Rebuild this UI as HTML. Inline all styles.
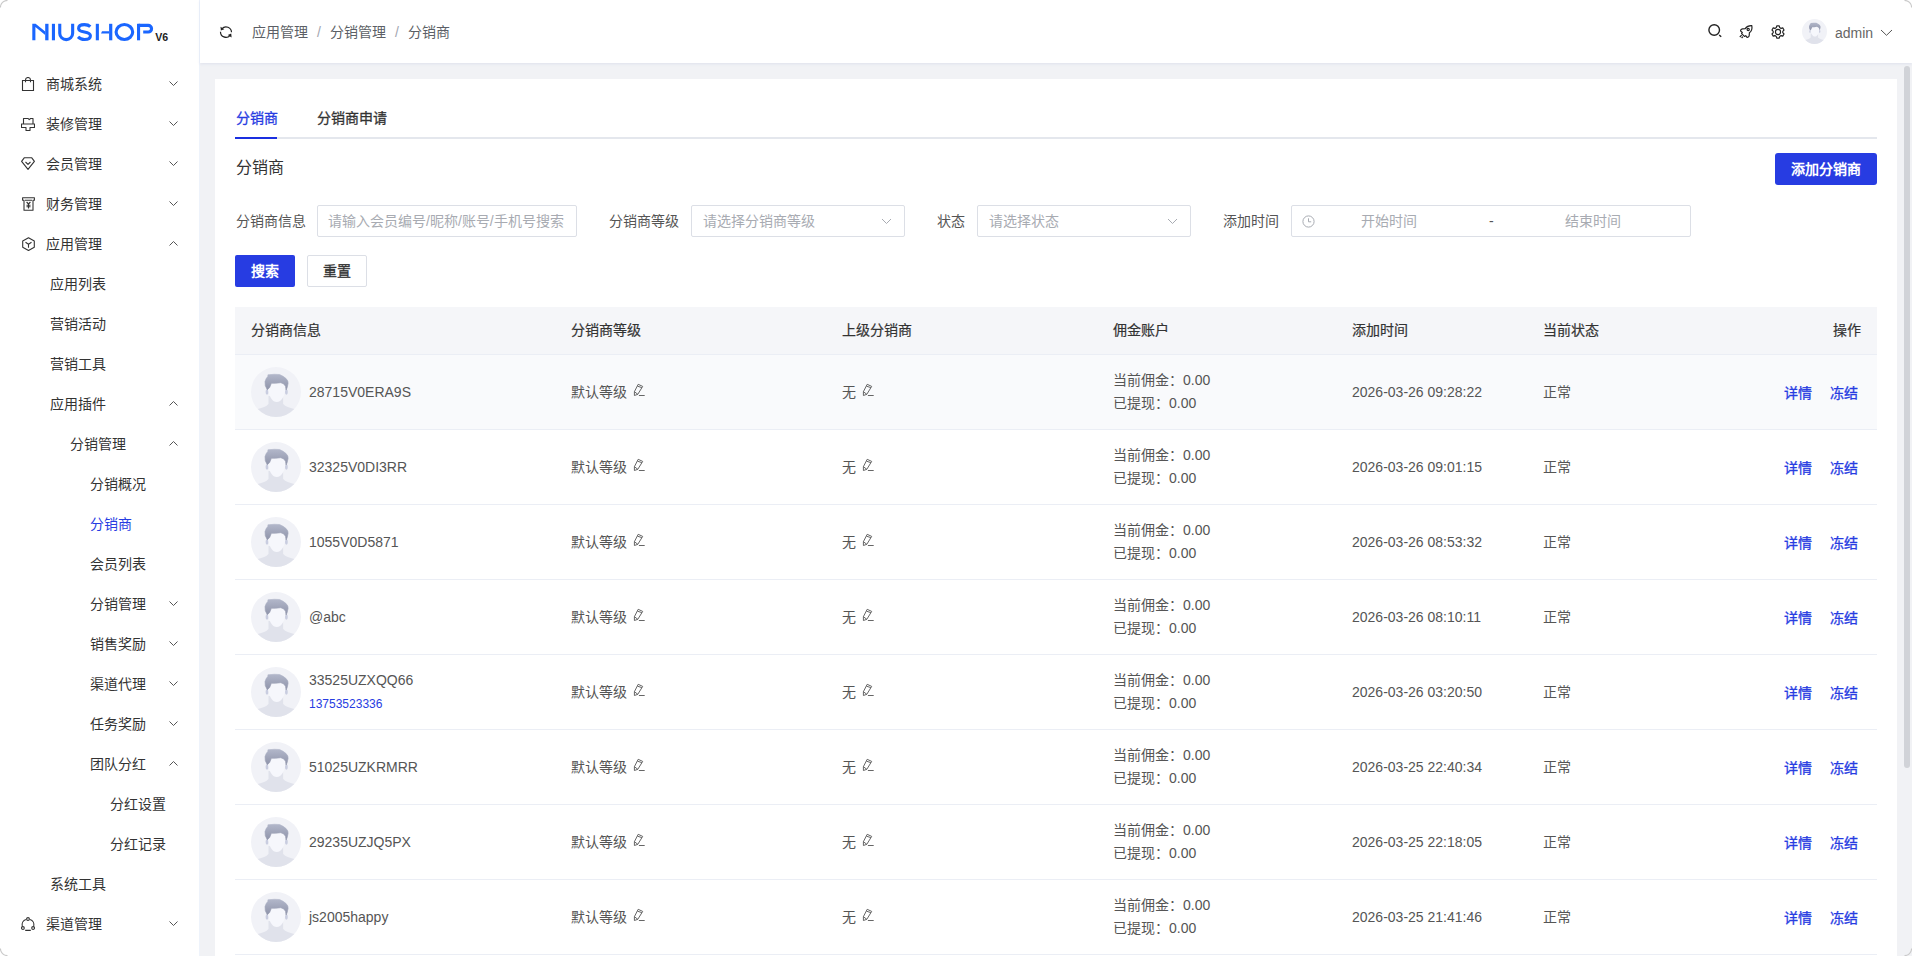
<!DOCTYPE html>
<html lang="zh-CN"><head><meta charset="utf-8">
<style>
*{margin:0;padding:0;box-sizing:border-box}
html,body{width:1912px;height:956px;overflow:hidden;background:#f1f2f5;font-family:"Liberation Sans",sans-serif;font-size:14px;color:#333}
.abs{position:absolute}
#side{position:absolute;left:0;top:0;width:199px;height:956px;background:#fff}
#sideline{position:absolute;left:199px;top:0;width:1px;height:956px;background:#eef3fb}
#hdr{position:absolute;left:200px;top:0;width:1712px;height:63px;background:#fff;box-shadow:0 1px 3px rgba(40,70,160,.09)}
.mi{position:absolute;height:40px;line-height:42px;color:#333;white-space:nowrap}
.mi.act{color:#273ce2}
.bc{position:absolute;top:21px;line-height:22px;color:#5c5f66;white-space:nowrap}
#card{position:absolute;left:215px;top:79px;width:1682px;height:900px;background:#fff}
.lbl{position:absolute;top:205px;line-height:32px;color:#555;white-space:nowrap}
.inp{position:absolute;top:205px;height:32px;border:1px solid #dcdfe6;background:#fff;border-radius:2px}
.ph{color:#a8abb2}
.inp .ph{position:absolute;top:0;line-height:30px;white-space:nowrap}
.btn{position:absolute;top:255px;width:60px;height:32px;line-height:32px;text-align:center;border-radius:2px;font-weight:bold}
#thead{position:absolute;left:235px;top:307px;width:1642px;height:48px;background:#f5f6f9;border-bottom:1px solid #ebeef5}
.th{position:absolute;top:0;line-height:46px;color:#333;font-weight:500;-webkit-text-stroke:0.2px #333;white-space:nowrap}
.row{position:absolute;left:235px;width:1642px;height:75px;border-bottom:1px solid #ebeef5;background:#fff}
.row.hov{background:#f9fafc}
.row>div{position:absolute;white-space:nowrap;color:#555}
.av{left:16px;top:12px;width:50px;height:50px}
.av svg{display:block}
.nm{left:74px;line-height:22px}
.row .ph{left:74px;top:40px;font-size:12px;line-height:18px;color:#273ce2}
.c2{left:336px;top:26px;line-height:22px}
.c3{left:607px;top:26px;line-height:22px}
.pen{position:relative;top:0;margin-left:6px}
.c4a{left:878px;top:14px;line-height:23px}
.c4b{left:878px;top:37px;line-height:23px}
.c5{left:1117px;top:26px;line-height:22px}
.c6{left:1308px;top:26px;line-height:22px}
.op1{left:1549px;top:27px;line-height:22px;color:#273ce2!important;font-weight:500;-webkit-text-stroke:0.3px #273ce2}
.op2{left:1595px;top:27px;line-height:22px;color:#273ce2!important;font-weight:500;-webkit-text-stroke:0.3px #273ce2}
</style></head><body>
<svg width="0" height="0" style="position:absolute"><defs><linearGradient id="hg" x1="0" y1="0" x2="0" y2="1"><stop offset="0" stop-color="#b2b7ca"/><stop offset="1" stop-color="#8e93a9"/></linearGradient></defs></svg>
<div id="side">
<svg class="abs" style="left:26px;top:16px" width="150" height="32" viewBox="0 0 150 32">
<g fill="#1a66ff">
<path d="M6.3 7.8H9.6L19.2 15.6V18.9L9.4 11V24.3H6.3Z"/>
<rect x="19.2" y="7.8" width="3.3" height="16.5"/>
<rect x="25.9" y="7.8" width="3.1" height="16.5"/>
<rect x="69.8" y="7.8" width="3.1" height="16.5"/>
<path d="M76 15.3H83.1V17.6H75Z"/>
<rect x="83.1" y="7.8" width="3.2" height="16.5"/>
<rect x="111" y="7.8" width="3.1" height="16.5"/>
</g>
<g fill="none" stroke="#1a66ff" stroke-width="3.1">
<path d="M33.75 7.8V17.2A6.45 6.45 0 0 0 46.65 17.2V7.8"/>
<path d="M64.3 10.6C62.6 9 60.5 8.6 58.4 8.6C55 8.6 52.6 10 52.6 12.4C52.6 17.6 64.4 14.3 64.4 19.7C64.4 22.3 62 23.5 58.6 23.5C55.8 23.5 53.6 22.6 52 20.9"/>
<ellipse cx="98.4" cy="16" rx="8.3" ry="7.45"/>
<path d="M112.5 9.35H122.2A3.35 3.35 0 0 1 122.2 16.05H117.2"/>
</g>
<text x="129.2" y="24.7" font-family="Liberation Sans" font-weight="bold" font-size="10.6" fill="#222">V6</text>
</svg>
</div>
<div id="sideline"></div>
<div id="hdr"></div>
<svg class="abs" style="left:219px;top:25px" width="14" height="14" viewBox="0 0 14 14"><g fill="none" stroke="#222" stroke-width="1.2"><path d="M3 3.6A5.5 5.5 0 0 1 12.5 7.3"/><path d="M1.5 6.7A5.5 5.5 0 0 0 11 10.6"/></g><g fill="#222"><path d="M1.5 1.7L1.9 5.6L5.3 4.2Z"/><path d="M12.6 12.4L12.2 8.5L8.8 9.9Z"/></g></svg>
<div class="bc" style="left:252px">应用管理</div>
<div class="bc" style="left:317px;color:#a3a6b0">/</div>
<div class="bc" style="left:330px">分销管理</div>
<div class="bc" style="left:395px;color:#a3a6b0">/</div>
<div class="bc" style="left:408px">分销商</div>
<svg class="abs" style="left:1706px;top:22px" width="18" height="17" viewBox="0 0 18 17"><g fill="none" stroke="#222" stroke-width="1.4"><circle cx="8.2" cy="8" r="5.3"/><path d="M13.2 13L15.2 14.8"/></g></svg>
<svg class="abs" style="left:1738px;top:24px" width="16" height="16" viewBox="0 0 16 16"><g fill="none" stroke="#222" stroke-width="1.2" stroke-linejoin="round"><path d="M13.8 1.6C11 1.4 8.8 2.4 7.2 4.6L4.5 4.8C3 5 2.2 6.5 2.8 7.2L4.3 8.4L3.6 9.6L6.5 12.4L7.7 11.7L8.9 13.2C9.6 13.8 11 12.9 11.2 11.5L11.4 8.8C13.6 7.2 14.4 5 13.8 1.6Z"/><circle cx="10.2" cy="5.5" r="1.1"/><path d="M3.6 11.2L1.8 13 M5 12.6L3.6 14"/></g></svg>
<svg class="abs" style="left:1770px;top:24px" width="16" height="16" viewBox="0 0 16 16"><g fill="none" stroke="#222" stroke-width="1.25" stroke-linejoin="round" transform="translate(8 8) scale(0.9) translate(-8 -8)"><path d="M6.6 1.2H9.4L9.9 3.1L11.4 4L13.3 3.4L14.7 5.8L13.3 7.2V8.8L14.7 10.2L13.3 12.6L11.4 12L9.9 12.9L9.4 14.8H6.6L6.1 12.9L4.6 12L2.7 12.6L1.3 10.2L2.7 8.8V7.2L1.3 5.8L2.7 3.4L4.6 4L6.1 3.1Z"/><circle cx="8" cy="8" r="2.85"/></g></svg>
<svg class="abs" style="left:1802px;top:19px" width="25" height="25" viewBox="0 0 50 50"><circle cx="25" cy="25" r="25" fill="#f1f2f7"/><path d="M17.5 29L32.1 29L32.1 37C34.5 39.5 38.5 40.8 43.2 42.1A25 25 0 0 1 6.8 42.1C11.5 40.8 15.5 39.5 17.5 37Z" fill="#e0e2eb"/><ellipse cx="16" cy="25" rx="1.4" ry="2.8" fill="#c9cde0"/><ellipse cx="35.4" cy="25" rx="1.4" ry="2.8" fill="#c9cde0"/><path d="M17.3 21C17.3 17.5 19.5 16 25.7 16C32 16 34.3 17.5 34.3 21C34.3 28.5 30.5 35.1 25.7 35.1C21 35.1 17.3 28.5 17.3 21Z" fill="#f6f7fc"/><path d="M16.9 7.8L23.4 7.25L28.6 7.5L32.1 9.3L35.1 11.6L36.8 14L37.1 16.3L36.2 20.4L35.1 23.1L34.5 19.3L32.7 16.9L29.8 15.7L24.5 16.3L20.4 16.3L18.7 20.4L16.3 22.8L14.3 18.7L14 14.6L15.2 11.6L16.9 9.3Z" fill="url(#hg)"/></svg>
<div class="abs" style="left:1835px;top:22px;line-height:22px;color:#666">admin</div>
<svg class="abs" style="left:1879.5px;top:28.5px" width="13" height="8" viewBox="0 0 13 8"><path d="M1 1L6.5 6.3L12 1" fill="none" stroke="#555" stroke-width="1"/></svg>
<div class="abs" style="left:1904px;top:66px;width:6px;height:702px;border-radius:3px;background:#d1d3d8"></div>
<div id="card"></div>
<svg class="abs" style="left:0;top:0;z-index:9" width="1912" height="956" viewBox="0 0 1912 956"><g fill="none" stroke="#c9c9c9" stroke-width="1.1"><path d="M0.4 7.5A7.1 7.1 0 0 1 7.5 0.4"/><path d="M1904.5 0.4A7.1 7.1 0 0 1 1911.6 7.5"/><path d="M0.4 948.5A7.1 7.1 0 0 0 7.5 955.6"/><path d="M1911.6 948.5A7.1 7.1 0 0 1 1904.5 955.6"/></g></svg>
<div class="abs" style="left:235px;top:137px;width:1642px;height:2px;background:#e4e7ed"></div>
<div class="abs" style="left:235px;top:137px;width:42px;height:2px;background:#1a2fe0"></div>
<div class="abs" style="left:236px;top:107px;line-height:22px;color:#273ce2;font-weight:500;-webkit-text-stroke:0.3px #273ce2">分销商</div>
<div class="abs" style="left:317px;top:107px;line-height:22px;color:#333;font-weight:500;-webkit-text-stroke:0.3px #333">分销商申请</div>
<div class="abs" style="left:236px;top:156px;line-height:24px;font-size:16px;color:#333">分销商</div>
<div class="abs" style="left:1775px;top:153px;width:102px;height:32px;line-height:32px;text-align:center;background:#273ce2;color:#fff;font-weight:bold;border-radius:3px">添加分销商</div>
<div class="lbl" style="left:236px">分销商信息</div>
<div class="inp" style="left:317px;width:260px"><span class="ph" style="left:10px">请输入会员编号/昵称/账号/手机号搜索</span></div>
<div class="lbl" style="left:609px">分销商等级</div>
<div class="inp" style="left:691px;width:214px"><span class="ph" style="left:11px">请选择分销商等级</span><svg class="abs" style="left:189px;top:12px" width="11" height="7" viewBox="0 0 11 7"><path d="M1 1L5.5 5.5L10 1" fill="none" stroke="#a8abb2" stroke-width="1"/></svg></div>
<div class="lbl" style="left:937px">状态</div>
<div class="inp" style="left:977px;width:214px"><span class="ph" style="left:11px">请选择状态</span><svg class="abs" style="left:189px;top:12px" width="11" height="7" viewBox="0 0 11 7"><path d="M1 1L5.5 5.5L10 1" fill="none" stroke="#a8abb2" stroke-width="1"/></svg></div>
<div class="lbl" style="left:1223px">添加时间</div>
<div class="inp" style="left:1291px;width:400px"><svg class="abs" style="left:10px;top:9px" width="13" height="13" viewBox="0 0 13 13"><g fill="none" stroke="#a8abb2" stroke-width="1"><circle cx="6.5" cy="6.5" r="5.6"/><path d="M6.5 3.3V6.8H9.2"/></g></svg><span class="ph" style="left:69px">开始时间</span><span class="ph" style="left:197px;color:#555">-</span><span class="ph" style="left:273px">结束时间</span></div>
<div class="btn" style="left:235px;background:#273ce2;color:#fff">搜索</div>
<div class="btn" style="left:307px;border:1px solid #dcdfe6;color:#333;line-height:30px;font-weight:500;-webkit-text-stroke:0.3px #333">重置</div>
<div id="thead">
<div class="th" style="left:16px">分销商信息</div>
<div class="th" style="left:336px">分销商等级</div>
<div class="th" style="left:607px">上级分销商</div>
<div class="th" style="left:878px">佣金账户</div>
<div class="th" style="left:1117px">添加时间</div>
<div class="th" style="left:1308px">当前状态</div>
<div class="th" style="left:1598px">操作</div>
</div>
<div class="mi" style="top:63px;left:46px">商城系统</div>
<svg class="abs" style="left:21px;top:77px" width="14" height="14" viewBox="0 0 14 14"><path d="M1.5 3.5H12.5V13.5H1.5Z M4.5 5.3V3A2.5 2.5 0 0 1 9.5 3V5.3" fill="none" stroke="#333" stroke-width="1.1"/></svg>
<svg class="abs" style="left:168.5px;top:80.5px" width="9" height="5" viewBox="0 0 9 5"><path d="M0.5 0.5L4.5 4.5L8.5 0.5" fill="none" stroke="#555" stroke-width="1"/></svg>
<div class="mi" style="top:103px;left:46px">装修管理</div>
<svg class="abs" style="left:21px;top:117px" width="14" height="14" viewBox="0 0 14 14"><path d="M2.5 1.5H7.2L8.2 2.6L9.6 1.5H12V7H2.5Z M0.5 7H13.5V10.5H9V13.5H5V10.5H0.5Z" fill="none" stroke="#333" stroke-width="1.1" stroke-linejoin="round"/></svg>
<svg class="abs" style="left:168.5px;top:120.5px" width="9" height="5" viewBox="0 0 9 5"><path d="M0.5 0.5L4.5 4.5L8.5 0.5" fill="none" stroke="#555" stroke-width="1"/></svg>
<div class="mi" style="top:143px;left:46px">会员管理</div>
<svg class="abs" style="left:21px;top:157px" width="14" height="13" viewBox="0 0 14 13"><path d="M3.2 0.8H10.8L13.4 4.3L7 12.4L0.6 4.3Z M4.5 5L7 7.3L9.5 5" fill="none" stroke="#333" stroke-width="1.1" stroke-linejoin="round"/></svg>
<svg class="abs" style="left:168.5px;top:160.5px" width="9" height="5" viewBox="0 0 9 5"><path d="M0.5 0.5L4.5 4.5L8.5 0.5" fill="none" stroke="#555" stroke-width="1"/></svg>
<div class="mi" style="top:183px;left:46px">财务管理</div>
<svg class="abs" style="left:21.5px;top:197px" width="13" height="14" viewBox="0 0 13 14"><path d="M0.6 0.8H12.4V3.2H11V13.2H2V3.2H0.6Z M3 3.2H10 M4.6 5L6.5 7L8.4 5 M6.5 7V11.5 M4.5 8.2H8.5 M4.5 9.8H8.5" fill="none" stroke="#333" stroke-width="1.1" stroke-linejoin="round"/></svg>
<svg class="abs" style="left:168.5px;top:200.5px" width="9" height="5" viewBox="0 0 9 5"><path d="M0.5 0.5L4.5 4.5L8.5 0.5" fill="none" stroke="#555" stroke-width="1"/></svg>
<div class="mi" style="top:223px;left:46px">应用管理</div>
<svg class="abs" style="left:21.5px;top:237px" width="13" height="14" viewBox="0 0 13 14"><path d="M6.5 0.7L12.3 3.9V10.3L6.5 13.5L0.7 10.3V3.9Z M3.5 5.2L6.5 7.2L9.5 5.2 M6.5 7.2V10.8" fill="none" stroke="#333" stroke-width="1.1" stroke-linejoin="round"/></svg>
<svg class="abs" style="left:168.5px;top:240.5px" width="9" height="5" viewBox="0 0 9 5"><path d="M0.5 4.5L4.5 0.5L8.5 4.5" fill="none" stroke="#555" stroke-width="1"/></svg>
<div class="mi" style="top:263px;left:50px">应用列表</div>
<div class="mi" style="top:303px;left:50px">营销活动</div>
<div class="mi" style="top:343px;left:50px">营销工具</div>
<div class="mi" style="top:383px;left:50px">应用插件</div>
<svg class="abs" style="left:168.5px;top:400.5px" width="9" height="5" viewBox="0 0 9 5"><path d="M0.5 4.5L4.5 0.5L8.5 4.5" fill="none" stroke="#555" stroke-width="1"/></svg>
<div class="mi" style="top:423px;left:70px">分销管理</div>
<svg class="abs" style="left:168.5px;top:440.5px" width="9" height="5" viewBox="0 0 9 5"><path d="M0.5 4.5L4.5 0.5L8.5 4.5" fill="none" stroke="#555" stroke-width="1"/></svg>
<div class="mi" style="top:463px;left:90px">分销概况</div>
<div class="mi act" style="top:503px;left:90px">分销商</div>
<div class="mi" style="top:543px;left:90px">会员列表</div>
<div class="mi" style="top:583px;left:90px">分销管理</div>
<svg class="abs" style="left:168.5px;top:600.5px" width="9" height="5" viewBox="0 0 9 5"><path d="M0.5 0.5L4.5 4.5L8.5 0.5" fill="none" stroke="#555" stroke-width="1"/></svg>
<div class="mi" style="top:623px;left:90px">销售奖励</div>
<svg class="abs" style="left:168.5px;top:640.5px" width="9" height="5" viewBox="0 0 9 5"><path d="M0.5 0.5L4.5 4.5L8.5 0.5" fill="none" stroke="#555" stroke-width="1"/></svg>
<div class="mi" style="top:663px;left:90px">渠道代理</div>
<svg class="abs" style="left:168.5px;top:680.5px" width="9" height="5" viewBox="0 0 9 5"><path d="M0.5 0.5L4.5 4.5L8.5 0.5" fill="none" stroke="#555" stroke-width="1"/></svg>
<div class="mi" style="top:703px;left:90px">任务奖励</div>
<svg class="abs" style="left:168.5px;top:720.5px" width="9" height="5" viewBox="0 0 9 5"><path d="M0.5 0.5L4.5 4.5L8.5 0.5" fill="none" stroke="#555" stroke-width="1"/></svg>
<div class="mi" style="top:743px;left:90px">团队分红</div>
<svg class="abs" style="left:168.5px;top:760.5px" width="9" height="5" viewBox="0 0 9 5"><path d="M0.5 4.5L4.5 0.5L8.5 4.5" fill="none" stroke="#555" stroke-width="1"/></svg>
<div class="mi" style="top:783px;left:110px">分红设置</div>
<div class="mi" style="top:823px;left:110px">分红记录</div>
<div class="mi" style="top:863px;left:50px">系统工具</div>
<div class="mi" style="top:903px;left:46px">渠道管理</div>
<svg class="abs" style="left:21px;top:917px" width="14" height="14" viewBox="0 0 14 14"><g fill="none" stroke="#333" stroke-width="1.1"><circle cx="7" cy="2" r="1.4"/><circle cx="1.9" cy="11" r="1.4"/><circle cx="12.1" cy="11" r="1.4"/><path d="M4.9 2.4A5.6 5.6 0 0 0 1.3 9 M9.1 2.4A5.6 5.6 0 0 1 12.7 9 M4.2 13.4H9.8"/></g></svg>
<svg class="abs" style="left:168.5px;top:920.5px" width="9" height="5" viewBox="0 0 9 5"><path d="M0.5 0.5L4.5 4.5L8.5 0.5" fill="none" stroke="#555" stroke-width="1"/></svg><div class="row hov" style="top:355px"><div class="av"><svg width="50" height="50" viewBox="0 0 50 50"><circle cx="25" cy="25" r="25" fill="#f1f2f7"/><path d="M17.5 29L32.1 29L32.1 37C34.5 39.5 38.5 40.8 43.2 42.1A25 25 0 0 1 6.8 42.1C11.5 40.8 15.5 39.5 17.5 37Z" fill="#e0e2eb"/><ellipse cx="16" cy="25" rx="1.4" ry="2.8" fill="#c9cde0"/><ellipse cx="35.4" cy="25" rx="1.4" ry="2.8" fill="#c9cde0"/><path d="M17.3 21C17.3 17.5 19.5 16 25.7 16C32 16 34.3 17.5 34.3 21C34.3 28.5 30.5 35.1 25.7 35.1C21 35.1 17.3 28.5 17.3 21Z" fill="#f6f7fc"/><path d="M16.9 7.8L23.4 7.25L28.6 7.5L32.1 9.3L35.1 11.6L36.8 14L37.1 16.3L36.2 20.4L35.1 23.1L34.5 19.3L32.7 16.9L29.8 15.7L24.5 16.3L20.4 16.3L18.7 20.4L16.3 22.8L14.3 18.7L14 14.6L15.2 11.6L16.9 9.3Z" fill="url(#hg)" stroke="url(#hg)" stroke-width="0.6" stroke-linejoin="round"/></svg></div><div class="nm" style="top:26px">28715V0ERA9S</div>
<div class="c2">默认等级<svg class="pen" width="14" height="14" viewBox="0 0 14 14"><path d="M1.4 12.5L1.4 8.7L5.2 1.3L9.7 3.4L4.8 11.3Z M4.5 3.2L8.8 4.6 M1.4 8.7L4.8 11.3 M5.9 12.5H11.7" fill="none" stroke="#555" stroke-width="0.9" stroke-linejoin="round"/></svg></div><div class="c3">无<svg class="pen" width="14" height="14" viewBox="0 0 14 14"><path d="M1.4 12.5L1.4 8.7L5.2 1.3L9.7 3.4L4.8 11.3Z M4.5 3.2L8.8 4.6 M1.4 8.7L4.8 11.3 M5.9 12.5H11.7" fill="none" stroke="#555" stroke-width="0.9" stroke-linejoin="round"/></svg></div>
<div class="c4a">当前佣金：0.00</div><div class="c4b">已提现：0.00</div>
<div class="c5">2026-03-26 09:28:22</div><div class="c6">正常</div>
<div class="op1">详情</div><div class="op2">冻结</div></div>
<div class="row" style="top:430px"><div class="av"><svg width="50" height="50" viewBox="0 0 50 50"><circle cx="25" cy="25" r="25" fill="#f1f2f7"/><path d="M17.5 29L32.1 29L32.1 37C34.5 39.5 38.5 40.8 43.2 42.1A25 25 0 0 1 6.8 42.1C11.5 40.8 15.5 39.5 17.5 37Z" fill="#e0e2eb"/><ellipse cx="16" cy="25" rx="1.4" ry="2.8" fill="#c9cde0"/><ellipse cx="35.4" cy="25" rx="1.4" ry="2.8" fill="#c9cde0"/><path d="M17.3 21C17.3 17.5 19.5 16 25.7 16C32 16 34.3 17.5 34.3 21C34.3 28.5 30.5 35.1 25.7 35.1C21 35.1 17.3 28.5 17.3 21Z" fill="#f6f7fc"/><path d="M16.9 7.8L23.4 7.25L28.6 7.5L32.1 9.3L35.1 11.6L36.8 14L37.1 16.3L36.2 20.4L35.1 23.1L34.5 19.3L32.7 16.9L29.8 15.7L24.5 16.3L20.4 16.3L18.7 20.4L16.3 22.8L14.3 18.7L14 14.6L15.2 11.6L16.9 9.3Z" fill="url(#hg)" stroke="url(#hg)" stroke-width="0.6" stroke-linejoin="round"/></svg></div><div class="nm" style="top:26px">32325V0DI3RR</div>
<div class="c2">默认等级<svg class="pen" width="14" height="14" viewBox="0 0 14 14"><path d="M1.4 12.5L1.4 8.7L5.2 1.3L9.7 3.4L4.8 11.3Z M4.5 3.2L8.8 4.6 M1.4 8.7L4.8 11.3 M5.9 12.5H11.7" fill="none" stroke="#555" stroke-width="0.9" stroke-linejoin="round"/></svg></div><div class="c3">无<svg class="pen" width="14" height="14" viewBox="0 0 14 14"><path d="M1.4 12.5L1.4 8.7L5.2 1.3L9.7 3.4L4.8 11.3Z M4.5 3.2L8.8 4.6 M1.4 8.7L4.8 11.3 M5.9 12.5H11.7" fill="none" stroke="#555" stroke-width="0.9" stroke-linejoin="round"/></svg></div>
<div class="c4a">当前佣金：0.00</div><div class="c4b">已提现：0.00</div>
<div class="c5">2026-03-26 09:01:15</div><div class="c6">正常</div>
<div class="op1">详情</div><div class="op2">冻结</div></div>
<div class="row" style="top:505px"><div class="av"><svg width="50" height="50" viewBox="0 0 50 50"><circle cx="25" cy="25" r="25" fill="#f1f2f7"/><path d="M17.5 29L32.1 29L32.1 37C34.5 39.5 38.5 40.8 43.2 42.1A25 25 0 0 1 6.8 42.1C11.5 40.8 15.5 39.5 17.5 37Z" fill="#e0e2eb"/><ellipse cx="16" cy="25" rx="1.4" ry="2.8" fill="#c9cde0"/><ellipse cx="35.4" cy="25" rx="1.4" ry="2.8" fill="#c9cde0"/><path d="M17.3 21C17.3 17.5 19.5 16 25.7 16C32 16 34.3 17.5 34.3 21C34.3 28.5 30.5 35.1 25.7 35.1C21 35.1 17.3 28.5 17.3 21Z" fill="#f6f7fc"/><path d="M16.9 7.8L23.4 7.25L28.6 7.5L32.1 9.3L35.1 11.6L36.8 14L37.1 16.3L36.2 20.4L35.1 23.1L34.5 19.3L32.7 16.9L29.8 15.7L24.5 16.3L20.4 16.3L18.7 20.4L16.3 22.8L14.3 18.7L14 14.6L15.2 11.6L16.9 9.3Z" fill="url(#hg)" stroke="url(#hg)" stroke-width="0.6" stroke-linejoin="round"/></svg></div><div class="nm" style="top:26px">1055V0D5871</div>
<div class="c2">默认等级<svg class="pen" width="14" height="14" viewBox="0 0 14 14"><path d="M1.4 12.5L1.4 8.7L5.2 1.3L9.7 3.4L4.8 11.3Z M4.5 3.2L8.8 4.6 M1.4 8.7L4.8 11.3 M5.9 12.5H11.7" fill="none" stroke="#555" stroke-width="0.9" stroke-linejoin="round"/></svg></div><div class="c3">无<svg class="pen" width="14" height="14" viewBox="0 0 14 14"><path d="M1.4 12.5L1.4 8.7L5.2 1.3L9.7 3.4L4.8 11.3Z M4.5 3.2L8.8 4.6 M1.4 8.7L4.8 11.3 M5.9 12.5H11.7" fill="none" stroke="#555" stroke-width="0.9" stroke-linejoin="round"/></svg></div>
<div class="c4a">当前佣金：0.00</div><div class="c4b">已提现：0.00</div>
<div class="c5">2026-03-26 08:53:32</div><div class="c6">正常</div>
<div class="op1">详情</div><div class="op2">冻结</div></div>
<div class="row" style="top:580px"><div class="av"><svg width="50" height="50" viewBox="0 0 50 50"><circle cx="25" cy="25" r="25" fill="#f1f2f7"/><path d="M17.5 29L32.1 29L32.1 37C34.5 39.5 38.5 40.8 43.2 42.1A25 25 0 0 1 6.8 42.1C11.5 40.8 15.5 39.5 17.5 37Z" fill="#e0e2eb"/><ellipse cx="16" cy="25" rx="1.4" ry="2.8" fill="#c9cde0"/><ellipse cx="35.4" cy="25" rx="1.4" ry="2.8" fill="#c9cde0"/><path d="M17.3 21C17.3 17.5 19.5 16 25.7 16C32 16 34.3 17.5 34.3 21C34.3 28.5 30.5 35.1 25.7 35.1C21 35.1 17.3 28.5 17.3 21Z" fill="#f6f7fc"/><path d="M16.9 7.8L23.4 7.25L28.6 7.5L32.1 9.3L35.1 11.6L36.8 14L37.1 16.3L36.2 20.4L35.1 23.1L34.5 19.3L32.7 16.9L29.8 15.7L24.5 16.3L20.4 16.3L18.7 20.4L16.3 22.8L14.3 18.7L14 14.6L15.2 11.6L16.9 9.3Z" fill="url(#hg)" stroke="url(#hg)" stroke-width="0.6" stroke-linejoin="round"/></svg></div><div class="nm" style="top:26px">@abc</div>
<div class="c2">默认等级<svg class="pen" width="14" height="14" viewBox="0 0 14 14"><path d="M1.4 12.5L1.4 8.7L5.2 1.3L9.7 3.4L4.8 11.3Z M4.5 3.2L8.8 4.6 M1.4 8.7L4.8 11.3 M5.9 12.5H11.7" fill="none" stroke="#555" stroke-width="0.9" stroke-linejoin="round"/></svg></div><div class="c3">无<svg class="pen" width="14" height="14" viewBox="0 0 14 14"><path d="M1.4 12.5L1.4 8.7L5.2 1.3L9.7 3.4L4.8 11.3Z M4.5 3.2L8.8 4.6 M1.4 8.7L4.8 11.3 M5.9 12.5H11.7" fill="none" stroke="#555" stroke-width="0.9" stroke-linejoin="round"/></svg></div>
<div class="c4a">当前佣金：0.00</div><div class="c4b">已提现：0.00</div>
<div class="c5">2026-03-26 08:10:11</div><div class="c6">正常</div>
<div class="op1">详情</div><div class="op2">冻结</div></div>
<div class="row" style="top:655px"><div class="av"><svg width="50" height="50" viewBox="0 0 50 50"><circle cx="25" cy="25" r="25" fill="#f1f2f7"/><path d="M17.5 29L32.1 29L32.1 37C34.5 39.5 38.5 40.8 43.2 42.1A25 25 0 0 1 6.8 42.1C11.5 40.8 15.5 39.5 17.5 37Z" fill="#e0e2eb"/><ellipse cx="16" cy="25" rx="1.4" ry="2.8" fill="#c9cde0"/><ellipse cx="35.4" cy="25" rx="1.4" ry="2.8" fill="#c9cde0"/><path d="M17.3 21C17.3 17.5 19.5 16 25.7 16C32 16 34.3 17.5 34.3 21C34.3 28.5 30.5 35.1 25.7 35.1C21 35.1 17.3 28.5 17.3 21Z" fill="#f6f7fc"/><path d="M16.9 7.8L23.4 7.25L28.6 7.5L32.1 9.3L35.1 11.6L36.8 14L37.1 16.3L36.2 20.4L35.1 23.1L34.5 19.3L32.7 16.9L29.8 15.7L24.5 16.3L20.4 16.3L18.7 20.4L16.3 22.8L14.3 18.7L14 14.6L15.2 11.6L16.9 9.3Z" fill="url(#hg)" stroke="url(#hg)" stroke-width="0.6" stroke-linejoin="round"/></svg></div><div class="nm" style="top:14px">33525UZXQQ66</div><div class="ph">13753523336</div>
<div class="c2">默认等级<svg class="pen" width="14" height="14" viewBox="0 0 14 14"><path d="M1.4 12.5L1.4 8.7L5.2 1.3L9.7 3.4L4.8 11.3Z M4.5 3.2L8.8 4.6 M1.4 8.7L4.8 11.3 M5.9 12.5H11.7" fill="none" stroke="#555" stroke-width="0.9" stroke-linejoin="round"/></svg></div><div class="c3">无<svg class="pen" width="14" height="14" viewBox="0 0 14 14"><path d="M1.4 12.5L1.4 8.7L5.2 1.3L9.7 3.4L4.8 11.3Z M4.5 3.2L8.8 4.6 M1.4 8.7L4.8 11.3 M5.9 12.5H11.7" fill="none" stroke="#555" stroke-width="0.9" stroke-linejoin="round"/></svg></div>
<div class="c4a">当前佣金：0.00</div><div class="c4b">已提现：0.00</div>
<div class="c5">2026-03-26 03:20:50</div><div class="c6">正常</div>
<div class="op1">详情</div><div class="op2">冻结</div></div>
<div class="row" style="top:730px"><div class="av"><svg width="50" height="50" viewBox="0 0 50 50"><circle cx="25" cy="25" r="25" fill="#f1f2f7"/><path d="M17.5 29L32.1 29L32.1 37C34.5 39.5 38.5 40.8 43.2 42.1A25 25 0 0 1 6.8 42.1C11.5 40.8 15.5 39.5 17.5 37Z" fill="#e0e2eb"/><ellipse cx="16" cy="25" rx="1.4" ry="2.8" fill="#c9cde0"/><ellipse cx="35.4" cy="25" rx="1.4" ry="2.8" fill="#c9cde0"/><path d="M17.3 21C17.3 17.5 19.5 16 25.7 16C32 16 34.3 17.5 34.3 21C34.3 28.5 30.5 35.1 25.7 35.1C21 35.1 17.3 28.5 17.3 21Z" fill="#f6f7fc"/><path d="M16.9 7.8L23.4 7.25L28.6 7.5L32.1 9.3L35.1 11.6L36.8 14L37.1 16.3L36.2 20.4L35.1 23.1L34.5 19.3L32.7 16.9L29.8 15.7L24.5 16.3L20.4 16.3L18.7 20.4L16.3 22.8L14.3 18.7L14 14.6L15.2 11.6L16.9 9.3Z" fill="url(#hg)" stroke="url(#hg)" stroke-width="0.6" stroke-linejoin="round"/></svg></div><div class="nm" style="top:26px">51025UZKRMRR</div>
<div class="c2">默认等级<svg class="pen" width="14" height="14" viewBox="0 0 14 14"><path d="M1.4 12.5L1.4 8.7L5.2 1.3L9.7 3.4L4.8 11.3Z M4.5 3.2L8.8 4.6 M1.4 8.7L4.8 11.3 M5.9 12.5H11.7" fill="none" stroke="#555" stroke-width="0.9" stroke-linejoin="round"/></svg></div><div class="c3">无<svg class="pen" width="14" height="14" viewBox="0 0 14 14"><path d="M1.4 12.5L1.4 8.7L5.2 1.3L9.7 3.4L4.8 11.3Z M4.5 3.2L8.8 4.6 M1.4 8.7L4.8 11.3 M5.9 12.5H11.7" fill="none" stroke="#555" stroke-width="0.9" stroke-linejoin="round"/></svg></div>
<div class="c4a">当前佣金：0.00</div><div class="c4b">已提现：0.00</div>
<div class="c5">2026-03-25 22:40:34</div><div class="c6">正常</div>
<div class="op1">详情</div><div class="op2">冻结</div></div>
<div class="row" style="top:805px"><div class="av"><svg width="50" height="50" viewBox="0 0 50 50"><circle cx="25" cy="25" r="25" fill="#f1f2f7"/><path d="M17.5 29L32.1 29L32.1 37C34.5 39.5 38.5 40.8 43.2 42.1A25 25 0 0 1 6.8 42.1C11.5 40.8 15.5 39.5 17.5 37Z" fill="#e0e2eb"/><ellipse cx="16" cy="25" rx="1.4" ry="2.8" fill="#c9cde0"/><ellipse cx="35.4" cy="25" rx="1.4" ry="2.8" fill="#c9cde0"/><path d="M17.3 21C17.3 17.5 19.5 16 25.7 16C32 16 34.3 17.5 34.3 21C34.3 28.5 30.5 35.1 25.7 35.1C21 35.1 17.3 28.5 17.3 21Z" fill="#f6f7fc"/><path d="M16.9 7.8L23.4 7.25L28.6 7.5L32.1 9.3L35.1 11.6L36.8 14L37.1 16.3L36.2 20.4L35.1 23.1L34.5 19.3L32.7 16.9L29.8 15.7L24.5 16.3L20.4 16.3L18.7 20.4L16.3 22.8L14.3 18.7L14 14.6L15.2 11.6L16.9 9.3Z" fill="url(#hg)" stroke="url(#hg)" stroke-width="0.6" stroke-linejoin="round"/></svg></div><div class="nm" style="top:26px">29235UZJQ5PX</div>
<div class="c2">默认等级<svg class="pen" width="14" height="14" viewBox="0 0 14 14"><path d="M1.4 12.5L1.4 8.7L5.2 1.3L9.7 3.4L4.8 11.3Z M4.5 3.2L8.8 4.6 M1.4 8.7L4.8 11.3 M5.9 12.5H11.7" fill="none" stroke="#555" stroke-width="0.9" stroke-linejoin="round"/></svg></div><div class="c3">无<svg class="pen" width="14" height="14" viewBox="0 0 14 14"><path d="M1.4 12.5L1.4 8.7L5.2 1.3L9.7 3.4L4.8 11.3Z M4.5 3.2L8.8 4.6 M1.4 8.7L4.8 11.3 M5.9 12.5H11.7" fill="none" stroke="#555" stroke-width="0.9" stroke-linejoin="round"/></svg></div>
<div class="c4a">当前佣金：0.00</div><div class="c4b">已提现：0.00</div>
<div class="c5">2026-03-25 22:18:05</div><div class="c6">正常</div>
<div class="op1">详情</div><div class="op2">冻结</div></div>
<div class="row" style="top:880px"><div class="av"><svg width="50" height="50" viewBox="0 0 50 50"><circle cx="25" cy="25" r="25" fill="#f1f2f7"/><path d="M17.5 29L32.1 29L32.1 37C34.5 39.5 38.5 40.8 43.2 42.1A25 25 0 0 1 6.8 42.1C11.5 40.8 15.5 39.5 17.5 37Z" fill="#e0e2eb"/><ellipse cx="16" cy="25" rx="1.4" ry="2.8" fill="#c9cde0"/><ellipse cx="35.4" cy="25" rx="1.4" ry="2.8" fill="#c9cde0"/><path d="M17.3 21C17.3 17.5 19.5 16 25.7 16C32 16 34.3 17.5 34.3 21C34.3 28.5 30.5 35.1 25.7 35.1C21 35.1 17.3 28.5 17.3 21Z" fill="#f6f7fc"/><path d="M16.9 7.8L23.4 7.25L28.6 7.5L32.1 9.3L35.1 11.6L36.8 14L37.1 16.3L36.2 20.4L35.1 23.1L34.5 19.3L32.7 16.9L29.8 15.7L24.5 16.3L20.4 16.3L18.7 20.4L16.3 22.8L14.3 18.7L14 14.6L15.2 11.6L16.9 9.3Z" fill="url(#hg)" stroke="url(#hg)" stroke-width="0.6" stroke-linejoin="round"/></svg></div><div class="nm" style="top:26px">js2005happy</div>
<div class="c2">默认等级<svg class="pen" width="14" height="14" viewBox="0 0 14 14"><path d="M1.4 12.5L1.4 8.7L5.2 1.3L9.7 3.4L4.8 11.3Z M4.5 3.2L8.8 4.6 M1.4 8.7L4.8 11.3 M5.9 12.5H11.7" fill="none" stroke="#555" stroke-width="0.9" stroke-linejoin="round"/></svg></div><div class="c3">无<svg class="pen" width="14" height="14" viewBox="0 0 14 14"><path d="M1.4 12.5L1.4 8.7L5.2 1.3L9.7 3.4L4.8 11.3Z M4.5 3.2L8.8 4.6 M1.4 8.7L4.8 11.3 M5.9 12.5H11.7" fill="none" stroke="#555" stroke-width="0.9" stroke-linejoin="round"/></svg></div>
<div class="c4a">当前佣金：0.00</div><div class="c4b">已提现：0.00</div>
<div class="c5">2026-03-25 21:41:46</div><div class="c6">正常</div>
<div class="op1">详情</div><div class="op2">冻结</div></div></body></html>
